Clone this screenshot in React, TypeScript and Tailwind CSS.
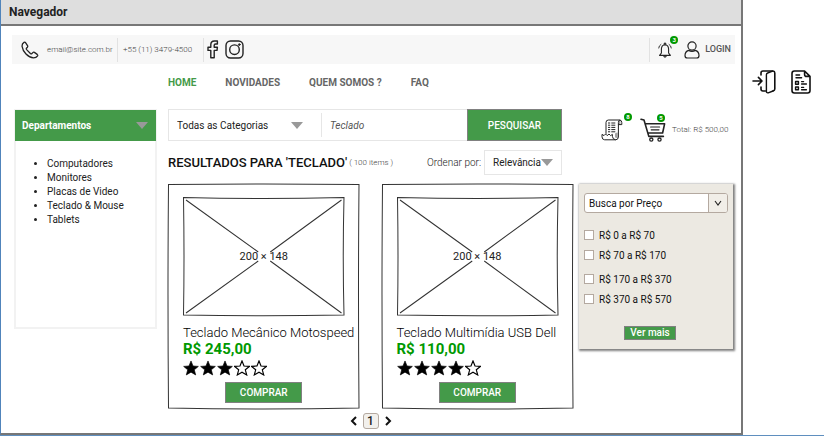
import type { ReactNode } from "react";

const stroke = {
  fill: "none",
  stroke: "currentColor",
  strokeLinecap: "round",
  strokeLinejoin: "round",
} as const;

function PhoneIcon() {
  return (
    <svg aria-hidden="true" className="h-[18px] w-[18px]" viewBox="0 0 18 18" {...stroke} strokeWidth="1.3">
      <path d="M3 1.4 Q1 2.6 1 5.2 Q1.6 9.6 5 13 Q8.6 16.6 12.6 16.8 Q15.2 16.8 16.6 14.8 Q17 14 16.2 13.4 L13.4 11.4 Q12.5 10.9 11.8 11.6 L10.7 12.7 Q10.1 13.1 9.4 12.5 L5.6 8.6 Q5 7.9 5.4 7.3 L6.4 6.2 Q7 5.5 6.5 4.7 L4.7 1.8 Q4 .8 3 1.4Z" />
    </svg>
  );
}

function FacebookIcon() {
  return (
    <svg aria-hidden="true" className="h-[19px] w-3" viewBox="0 0 12 19" {...stroke} strokeWidth="1.4">
      <path d="M3.8 17.8 V10.4 H1 V7.2 H3.8 V4.8 Q3.8 1 7.4 1 H10.4 V4 H8.6 Q7.2 4 7.2 5.3 V7.2 H10.4 L10 10.4 H7.2 V17.8Z" />
    </svg>
  );
}

function InstagramIcon() {
  return (
    <svg aria-hidden="true" className="h-[19px] w-[19px]" viewBox="0 0 19 19" {...stroke} strokeWidth="1.4">
      <rect x="1" y="1" width="17" height="17" rx="4.5" />
      <circle cx="9.5" cy="9.7" r="4.8" />
      <circle cx="14.3" cy="4.6" r=".9" fill="currentColor" strokeWidth=".8" />
    </svg>
  );
}

function BellIcon() {
  return (
    <svg aria-hidden="true" className="h-4 w-[14px]" viewBox="0 0 14 16" {...stroke} strokeWidth="1.1">
      <path d="M3.4 11 V7 Q3.6 3 7 2.8 Q10.4 3 10.6 7 V11 L12.4 13.4 H1.6Z" />
      <path d="M6.2 2.6 Q6 1 7 1 Q8 1 7.8 2.6 M5.6 13.8 Q7 16.4 8.4 13.8" />
      <path d="M.7 6 Q.9 3.6 2.9 2.4 M13.3 6 Q13.1 3.6 11.1 2.4" strokeWidth=".9" />
    </svg>
  );
}

function UserIcon() {
  return (
    <svg aria-hidden="true" className="h-[18px] w-4" viewBox="0 0 16 18" {...stroke} strokeWidth="1.2">
      <circle cx="8" cy="5" r="4.1" />
      <path d="M4.6 9.4 Q1 10.6 1 14.4 Q1 17 3.4 17 H12.6 Q15 17 15 14.4 Q15 10.6 11.4 9.4 Q8 11.2 4.6 9.4Z" />
    </svg>
  );
}

function ReceiptIcon() {
  return (
    <svg aria-hidden="true" className="h-[22px] w-[22px]" viewBox="0 0 22 22" {...stroke} strokeWidth="1">
      <path d="M5 14.5 V3.5 Q5 1 7.4 1 H18.6 Q20.8 1.2 20.8 3.6 V5.6 H17.4 V18 Q17.2 20.8 14.6 20.8 H3.6 Q1 20.6 1 17.8 V15.4 L3 16.6 L4.6 15 L6.2 16.6 L8 15 L9.6 16.6 L11.4 15.4 V17.4 Q11.6 20.4 14.4 20.8" />
      <path d="M17.4 5.6 V3.4 Q17.4 1.2 18.8 1" />
      <path d="M7 4 H15.4 M7 6.2 H15.4 M7 8.4 H15.4 M7 10.6 H15.4 M7 12.8 H15.4" strokeDasharray="2.2 1.1 4 1.1" strokeLinecap="butt" />
      <path d="M14.8 14.6 V18.2 M16 14 V18.6 M18.8 2.4 V4.8" strokeWidth=".6" />
    </svg>
  );
}

function CartIcon() {
  return (
    <svg aria-hidden="true" className="h-6 w-[26px]" viewBox="0 0 26 24" {...stroke} strokeWidth="1.6">
      <path d="M1 1.2 L4 2 L8.8 18.4 H23.4 M5.2 5.8 H24.6 L22.6 15 H7.8" />
      <path d="M10.6 9 H19.6 M11.2 11.8 H19" strokeWidth="1.2" />
      <circle cx="11.3" cy="21.6" r="1.6" strokeWidth="1.3" />
      <circle cx="19.5" cy="21.6" r="1.6" strokeWidth="1.3" />
    </svg>
  );
}

function ExitIcon() {
  return (
    <svg aria-hidden="true" className="h-6 w-6" viewBox="0 0 24 24" {...stroke} strokeWidth="1.6">
      <path d="M1 11 H9.6 M6.4 7.4 L10 11 L6.4 14.6" />
      <path d="M9 5 V3 Q9 1 11 1 H21 Q22.8 1.2 22.8 3 V19 Q22.8 20.6 21 21 M9 17 V19 Q9 21 11 21 H13.4" />
      <path d="M14.4 4.8 Q14.4 3.4 15.6 3 L20.6 1.2 M14.4 4.8 V21.2 Q14.4 23.2 16.2 22.8 L21 21" strokeWidth="1.4" />
    </svg>
  );
}

function ChecklistIcon() {
  return (
    <svg aria-hidden="true" className="h-6 w-5" viewBox="0 0 20 24" {...stroke} strokeWidth="1.6">
      <path d="M13.6 1 H3.4 Q1 1 1 3.4 V20.6 Q1 23 3.4 23 H16.6 Q19 23 19 20.6 V6.4Z M13.6 1 V4.4 Q13.6 6.4 15.6 6.4 H19" />
      <path d="M5 5 H8.6 M5 7.8 H10.6 M10.6 11.6 H12.6 M10.6 14 H15.4 M10.6 17.4 H12.6 M10.6 19.8 H15.4" strokeWidth="1.4" />
      <path d="M4.6 11.4 H7.4 V14.2 H4.6Z M4.6 17 H7.4 V19.8 H4.6Z" strokeWidth="1.5" />
    </svg>
  );
}

function Triangle() {
  return (
    <svg aria-hidden="true" className="pointer-events-none h-[7px] w-3 shrink-0" viewBox="0 0 12 7">
      <path d="M0 0 H12 L6 7Z" fill="#999" />
    </svg>
  );
}

function Chevron({ d }: { d: string }) {
  return (
    <svg aria-hidden="true" className="h-[10px] w-[10px]" viewBox="0 0 10 10" fill="none" stroke="#111" strokeWidth="2">
      <path d={d} />
    </svg>
  );
}

function Star({ filled }: { filled: boolean }) {
  return (
    <svg aria-hidden="true" className="h-4 w-4" viewBox="0 0 15 15">
      <path
        d="M7.5 .9 L9.4 5.6 L14.4 6 L10.6 9.2 L11.9 14 L7.5 11.4 L3.1 14 L4.4 9.2 L.6 6 L5.6 5.6Z"
        fill={filled ? "#000" : "none"}
        stroke="#000"
        strokeWidth={filled ? 0.6 : 1.1}
      />
    </svg>
  );
}

function Badge({ children }: { children: ReactNode }) {
  return (
    <span className="flex h-2 w-2 items-center justify-center rounded-full bg-[#009900] text-[6px] leading-none font-bold text-white">
      {children}
    </span>
  );
}

function Placeholder() {
  return (
    <div className="relative mx-[15px] flex h-[119px] items-center justify-center">
      <svg
        aria-hidden="true"
        className="absolute inset-0 h-full w-full overflow-visible"
        viewBox="0 0 161 119"
        preserveAspectRatio="none"
        fill="none"
        stroke="#333"
      >
        <path d="M.5 .5 Q80 2.5 160.5 .5 Q159 60 160.5 118 Q80 119.5 .5 118 Q1.5 60 .5 .5Z" />
        <path d="M3 3 L75 55 M158 3 L87 55 M3 116 L75 64 M158 116 L87 64" />
      </svg>
      <span className="relative text-[11px] leading-none text-[#222]">200 × 148</span>
    </div>
  );
}

type Product = { name: string; price: string; rating: number };

function ProductCard({ name, price, rating }: Product) {
  return (
    <article className="relative flex-1 pt-[13px] pb-[6px]">
      <svg
        aria-hidden="true"
        className="absolute inset-0 h-full w-full overflow-visible"
        viewBox="0 0 191 226"
        preserveAspectRatio="none"
        fill="none"
        stroke="#333"
      >
        <path d="M.5 .5 Q95 -.5 190.5 .5 Q189.5 110 190.5 225 Q95 227 .5 225 Q-.5 110 .5 .5Z" />
      </svg>
      <div className="relative">
        <Placeholder />
        <div className="pl-[15px] whitespace-nowrap">
          <h3 className="mt-[9px] text-[13px] leading-4 font-light text-black">{name}</h3>
          <p className="text-[15px] leading-4 font-bold text-[#009900]">{price}</p>
          <div role="img" aria-label={`${rating} de 5 estrelas`} className="mt-[3px] flex gap-px">
            {[1, 2, 3, 4, 5].map((n) => (
              <Star key={n} filled={n <= rating} />
            ))}
          </div>
        </div>
        <button type="button" className="mx-auto mt-[6px] block h-[21px] w-[77px] border border-[#808080] bg-[#449a49] text-[10px] leading-none font-medium text-white">
          COMPRAR
        </button>
      </div>
    </article>
  );
}

const departments = ["Computadores", "Monitores", "Placas de Video", "Teclado & Mouse", "Tablets"];
const products: Product[] = [
  { name: "Teclado Mecânico Motospeed", price: "R$ 245,00", rating: 3 },
  { name: "Teclado Multimídia USB Dell", price: "R$ 110,00", rating: 4 },
];
const ranges = [
  ["R$ 0 a R$ 70", "R$ 70 a R$ 170"],
  ["R$ 170 a R$ 370", "R$ 370 a R$ 570"],
];

function TopBar() {
  return (
    <div className="flex h-[29px] items-center bg-[#f7f7f7] pr-1 pl-[9px] text-[8px] text-[#444]">
      <span className="text-[#222]"><PhoneIcon /></span>
      <a href="mailto:email@site.com.br" className="ml-2 w-[70px] font-light">email@site.com.br</a>
      <span className="h-6 w-px bg-[#e2e2e2]" />
      <a href="tel:+551134794500" className="ml-[5px] w-20 font-light">+55 (11) 3479-4500</a>
      <span className="h-6 w-px bg-[#e2e2e2]" />
      <a href="#facebook" aria-label="Facebook" className="ml-[3px] text-[#222]"><FacebookIcon /></a>
      <a href="#instagram" aria-label="Instagram" className="ml-[6px] text-[#222]"><InstagramIcon /></a>
      <span className="ml-auto h-6 w-px bg-[#e2e2e2]" />
      <button type="button" aria-label="Notificações" className="relative ml-2 text-[#222]">
        <BellIcon />
        <span className="absolute -top-[6px] left-3"><Badge>3</Badge></span>
      </button>
      <a href="#login" className="ml-3 flex items-center gap-[5px] text-[9px] font-medium text-[#555]">
        <span className="text-[#222]"><UserIcon /></span>
        LOGIN
      </a>
    </div>
  );
}

function Departments() {
  return (
    <aside className="row-span-3 h-[220px] border-2 border-[#f2f2f2] text-[#222]">
      <button type="button" className="-mx-px -mt-px flex h-[31px] w-[141px] items-center justify-between bg-[#449a49] pr-2 pl-[7px] text-[10px] font-bold text-white">
        Departamentos
        <Triangle />
      </button>
      <ul className="mt-4 list-disc pl-[31px] text-[10px] leading-[14px]">
        {departments.map((d) => (
          <li key={d}>{d}</li>
        ))}
      </ul>
    </aside>
  );
}

function SearchBar() {
  return (
    <form className="mr-[11px] flex h-8 items-center border border-[#e6e6e6]" onSubmit={(e) => e.preventDefault()}>
      <div className="flex h-6 w-[153px] items-center border-r border-[#e6e6e6] pr-[18px]">
        <select aria-label="Categoria" className="-mr-3 min-w-0 flex-1 appearance-none pl-2 text-[10px] text-[#222] outline-none">
          <option>Todas as Categorias</option>
        </select>
        <Triangle />
      </div>
      <input aria-label="Produto" defaultValue="Teclado" className="min-w-0 flex-1 px-2 text-[10px] text-[#555] italic outline-none" />
      <button type="submit" className="-my-px -mr-px h-8 w-[95px] self-stretch border border-[#808080] bg-[#449a49] text-[10px] font-medium text-white">
        PESQUISAR
      </button>
    </form>
  );
}

function PriceFilter() {
  return (
    <aside className="mr-px h-[165px] bg-[#ece9e2] px-[5px] pt-[9px] text-[10px] text-[#111] shadow-[1px_1px_2px_1px_rgba(0,0,0,0.5)]">
      <div className="flex h-5 items-center rounded-[3px] border border-[#b4a9a0] bg-white">
        <select aria-label="Busca por Preço" className="-mr-[19px] h-full min-w-0 flex-1 appearance-none pl-1 outline-none">
          <option>Busca por Preço</option>
        </select>
        <span className="pointer-events-none flex h-full w-[19px] items-center justify-center rounded-r-[2px] border-l border-[#b4a9a0] bg-[#f1eee8]">
          <svg aria-hidden="true" className="h-2 w-2" viewBox="0 0 8 8" fill="none" stroke="#222" strokeWidth="1.1">
            <path d="M1 2 L4 6 L7 2" />
          </svg>
        </span>
      </div>
      <fieldset className="mt-4 flex flex-col gap-3">
        {ranges.map((group) => (
          <div key={group[0]} className="flex flex-col gap-2">
            {group.map((label) => (
              <label key={label} className="flex h-3 items-center gap-[5px]">
                <input type="checkbox" className="h-[10px] w-[10px] appearance-none border border-[#b4a9a0] bg-white checked:bg-[#449a49]" />
                {label}
              </label>
            ))}
          </div>
        ))}
      </fieldset>
      <button type="button" className="mt-[21px] ml-10 block h-[14px] w-[52px] border border-[#808080] bg-[#449a49] text-[10px] leading-none font-medium text-white">
        Ver mais
      </button>
    </aside>
  );
}

export default function App() {
  return (
    <div className="flex min-h-screen border-b border-[#5f8fbf] bg-white font-['Roboto','Liberation_Sans',sans-serif]">
      <div className="flex flex-1 flex-col border-r-2 border-b-2 border-l border-r-[#777] border-b-[#777] border-l-[#5084bb]">
        <header className="flex h-[26px] items-center border-b-2 border-[#777] bg-[#dedede] pl-2 text-[12px] font-bold text-[#222]">
          Navegador
        </header>
        <div className="flex-1 pt-[9px] pr-[6px] pl-[11px]">
          <TopBar />
          <nav className="flex h-[45px] items-center gap-[29px] pb-[9px] pl-[156px] text-[10px] font-bold text-[#666]">
            <a href="#home" className="text-[#449a49]">HOME</a>
            <a href="#novidades">NOVIDADES</a>
            <a href="#quem-somos">QUEM SOMOS ?</a>
            <a href="#faq">FAQ</a>
          </nav>
          <main className="grid grid-cols-[143px_minmax(0,1fr)_161px] pr-px pl-[2px]">
            <Departments />
            <div className="ml-[11px]">
              <SearchBar />
              <div className="mr-[11px] flex h-[43px] items-center">
                <h1 className="text-[13px] font-medium whitespace-nowrap text-[#111]">RESULTADOS PARA 'TECLADO'</h1>
                <span className="ml-[2px] text-[8px] font-light whitespace-nowrap text-[#444]">( 100 items )</span>
                <label htmlFor="order" className="ml-auto text-[10px] font-light whitespace-nowrap text-[#222]">Ordenar por:</label>
                <div className="ml-[3px] flex h-[25px] w-[78px] items-center border border-[#e6e6e6] pr-2">
                  <select id="order" className="-mr-3 min-w-0 flex-1 appearance-none pl-2 text-[10px] text-[#222] outline-none">
                    <option>Relevância</option>
                  </select>
                  <Triangle />
                </div>
              </div>
              <div className="flex gap-[22px]">
                {products.map((p) => (
                  <ProductCard key={p.name} {...p} />
                ))}
              </div>
              <div className="mt-1 flex items-center justify-center gap-1">
                <button type="button" aria-label="Página anterior"><Chevron d="M7 1 L3 5 L7 9" /></button>
                <button type="button" className="h-4 w-4 rounded-[3px] border border-[#b4a9a0] bg-[#f2f0ec] text-[12px] leading-none font-medium text-[#222]">1</button>
                <button type="button" aria-label="Próxima página"><Chevron d="M3 1 L7 5 L3 9" /></button>
              </div>
            </div>
            <div className="ml-[6px]">
              <div className="flex h-[75px] items-start pt-[9px] pl-[22px] text-[8px] text-[#444]">
                <button type="button" aria-label="Pedidos" className="relative mt-px text-[#222]">
                  <ReceiptIcon />
                  <span className="absolute -top-[6px] left-[23px]"><Badge>8</Badge></span>
                </button>
                <button type="button" aria-label="Carrinho" className="relative ml-[17px] text-[#222]">
                  <CartIcon />
                  <span className="absolute -top-1 left-[17px]"><Badge>5</Badge></span>
                </button>
                <span className="mt-[6px] ml-[6px] font-light whitespace-nowrap">Total: R$ 500,00</span>
              </div>
              <PriceFilter />
            </div>
          </main>
        </div>
      </div>
      <div className="flex w-[81px] items-start gap-[15px] pt-[70px] pl-[9px] text-[#111]">
        <button type="button" aria-label="Sair"><ExitIcon /></button>
        <button type="button" aria-label="Relatório"><ChecklistIcon /></button>
      </div>
    </div>
  );
}
